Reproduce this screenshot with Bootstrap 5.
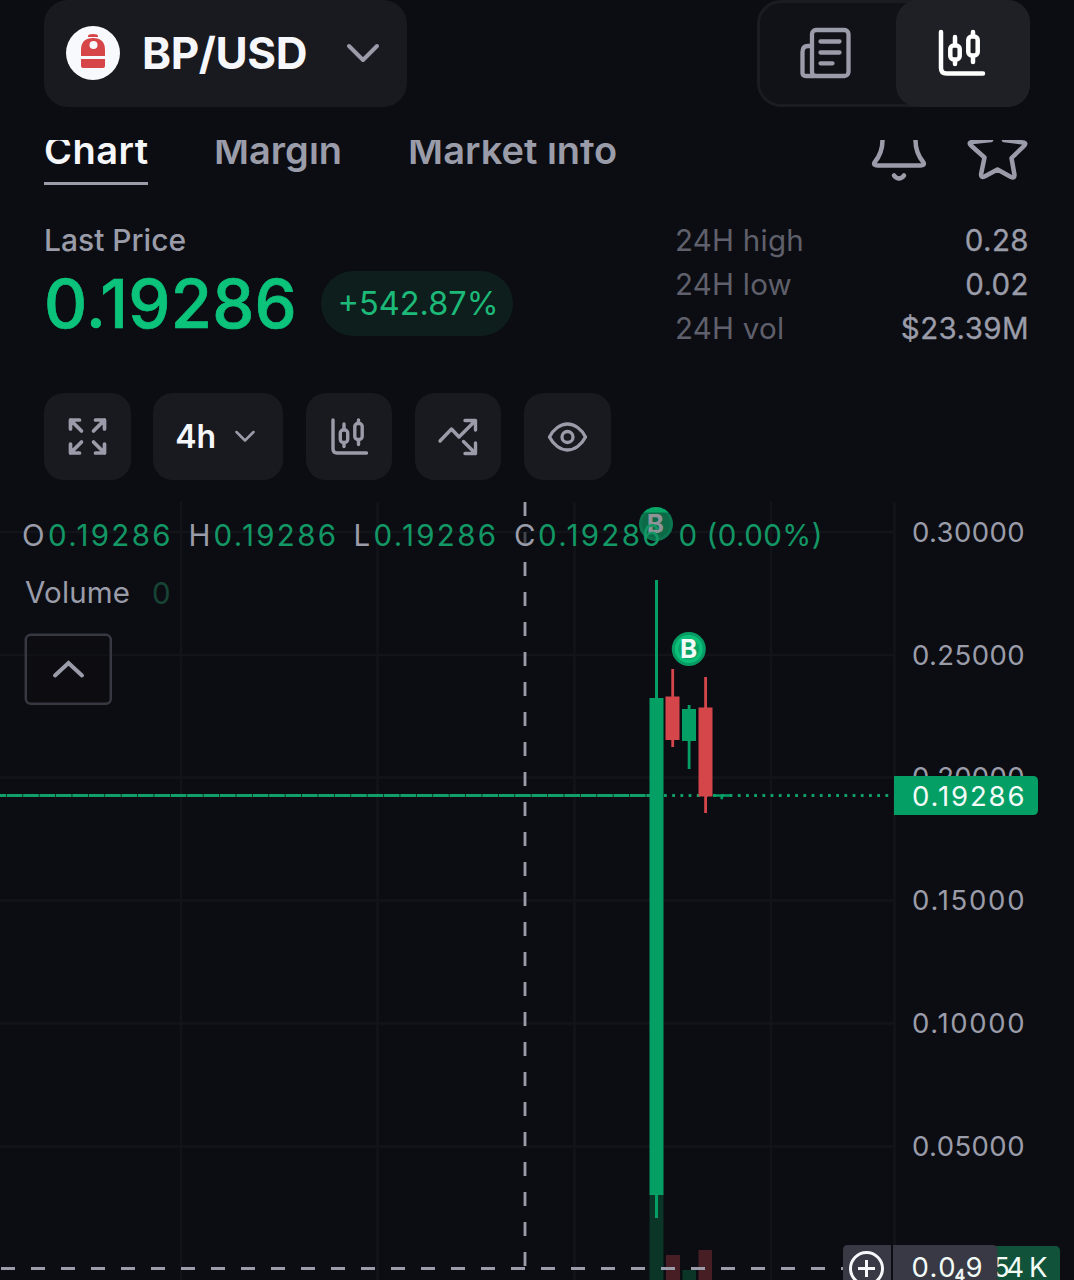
<!DOCTYPE html>
<html lang="en" data-bs-theme="dark">
<head>
<meta charset="utf-8">
<meta name="viewport" content="width=device-width, initial-scale=1">
<title>BP/USD</title>
<link href="https://cdn.jsdelivr.net/npm/bootstrap@5.3.0/dist/css/bootstrap.min.css" rel="stylesheet">
<style>
body{background:#0c0d12;color:#9a9ca9;font-family:Inter,"Liberation Sans",sans-serif;overflow:hidden}
.screen{width:1074px;height:1280px;overflow:hidden}
svg{display:block;flex:none}
.ico{fill:none;stroke:#9a9ca9;stroke-linecap:round;stroke-linejoin:round}
.topbar{height:107px;padding:0 44px}
.pair{width:363px;background:#191a1f;border-radius:24px;padding:0 27px 2px 22px;color:#f6f7fb}
.pair-name{font-size:44px;font-weight:700;line-height:1;margin-left:22px;letter-spacing:-.4px}
.switcher{width:273px;background:#111217;border:3px solid #1b1c21;border-radius:24px}
.switcher .on{width:134px;margin:-3px;background:#1f2025;border-radius:22px;padding-bottom:1px}
.switcher .off{padding:0 10px 1px 0}
.tabbar{height:53px;margin-top:33px;padding:0 44px;overflow:hidden}
.tabitem{font-size:38px;font-weight:600;line-height:45px;height:57px;margin-top:-12px;margin-right:66px;white-space:nowrap}
.tabitem.on{color:#f6f7fb;border-bottom:3px solid #9a9ca9;width:104px;letter-spacing:.5px}
.quote{margin-top:25px;padding:0 45px 0 44px;height:132px}
.cap-label{font-size:30px;font-weight:500;line-height:44px}
.last{font-size:67px;font-weight:500;line-height:66px;color:#0bc37b;width:277px;letter-spacing:.2px;padding-top:2px;-webkit-text-stroke:.7px #0bc37b}
.change{width:192px;height:65px;background:#0e1e1d;color:#1cb978;font-size:32.5px;padding:2px 0 0 2px}
.stats{width:354px;font-size:29.5px;line-height:44px;letter-spacing:.25px}
.stats dt{font-weight:400;color:#5f606b}
.stats dd{margin:0;font-weight:400;letter-spacing:.4px;-webkit-text-stroke:.3px #9a9ca9}
.tools{gap:22.8px;padding-left:44px;margin-top:43px;height:87px}
.tool{width:86.5px;height:87px;background:#191a1f;border-radius:20px;border:0;padding:0;overflow:hidden}
.tool.wide{width:129.5px;color:#f6f7fb;font-size:32px;font-weight:600}
.plot{margin-top:22px}
.plot text{font-family:Inter,"Liberation Sans",sans-serif;fill:#9a9ca9}
.plot .up{fill:#129765}
.plot .w{fill:#f3fbf8}
</style>
<script src="https://cdn.jsdelivr.net/npm/bootstrap@5.3.0/dist/js/bootstrap.bundle.min.js"></script>
</head>
<body>
<main class="screen d-flex flex-column">
<header class="topbar d-flex justify-content-between flex-shrink-0">
  <div class="pair d-flex align-items-center">
    <svg width="54" height="54" viewBox="0 0 54 54"><circle cx="27" cy="27" r="27" fill="#f8f9fc"/><path fill="#d64649" d="M22 10q0-2 5-2t5 2v1H22zM15 30v-6Q15 12 27 12t12 12v6zM15 33h24v7q0 2-2 2H17q-2 0-2-2z"/><circle cx="27.500" cy="19" r="4" fill="#f8f9fc"/></svg>
    <span class="pair-name">BP/USD</span>
    <svg class="ico ms-auto" width="34" height="22" viewBox="0 -1 34 22" stroke-width="4"><path d="M3 3l14 14L31 3"/></svg>
  </div>
  <div class="switcher d-flex">
    <div class="off flex-fill d-flex align-items-center justify-content-center"><svg class="ico" width="52" height="52" viewBox="799 27 52 52" stroke-width="4.300"><rect x="812" y="30" width="36.500" height="46" rx="4"/><path d="M812 46h-4q-5.500 0-5.500 6v21q0 3 3.500 3h9M820.500 41.500h19M820.500 52.500h19M820.500 63.300h12"/></svg></div>
    <div class="on d-flex align-items-center justify-content-center"><svg width="50" height="50" viewBox="938 28 50 50" fill="none" stroke="#fff" stroke-width="4.500" stroke-linecap="round" stroke-linejoin="round"><path d="M941 32v36q0 5.500 5.500 5.500H983M955 37v8M955 60v4M973 32v4M973 56v6"/><rect x="950.300" y="45.500" width="9.400" height="14" rx="3.500"/><rect x="968.300" y="36.500" width="9.400" height="19" rx="3.500"/></svg></div>
  </div>
</header>
<nav class="tabbar d-flex flex-shrink-0">
  <div class="tabitem on">Chart</div>
  <div class="tabitem">Margin</div>
  <div class="tabitem me-0">Market info</div>
  <svg class="ico ms-auto" width="160" height="53" viewBox="870 140 160 53" stroke-width="4.500"><path d="M874.500 162.500c5-6 8-12 8-22v-4q0-14 16.500-14t16.500 14v4c0 10 3 16 8 22q1.500 3-3 3h-43q-4.500 0-3-3z"/><path d="M894 175.500q5 6 10 0"/><path d="M997.500 126L991 140l-19 2q-4 .5-1 3.500l13.500 12-3.500 17q0 3.500 3.500 2L997.500 169.500l13.500 7.500q3.500 1.500 3.500-2L1011.500 158 1024 146q3-3-1-3.500L1004 140z"/></svg>
</nav>
<section class="quote d-flex justify-content-between flex-shrink-0">
  <div>
    <div class="cap-label">Last Price</div>
    <div class="d-flex align-items-center" style="margin-top:7px">
      <div class="last">0.19286</div>
      <div class="change rounded-pill d-flex align-items-center justify-content-center">+542.87%</div>
    </div>
  </div>
  <dl class="stats mb-0">
    <div class="d-flex justify-content-between"><dt>24H high</dt><dd>0.28</dd></div>
    <div class="d-flex justify-content-between"><dt>24H low</dt><dd>0.02</dd></div>
    <div class="d-flex justify-content-between"><dt>24H vol</dt><dd>$23.39M</dd></div>
  </dl>
</section>
<div class="tools d-flex flex-shrink-0">
  <button class="tool"><svg class="ico" width="87" height="87" viewBox="44.500 393 87 87" stroke-width="3.700"><path d="M71 429v-9h9M71 420l11 11M96 420h9v9M105 420l-11 11M71 444v9h9M71 453l11-11M105 444v9h-9M105 453l-11-11"/></svg></button>
  <button class="tool wide d-flex align-items-center justify-content-between" style="padding:0 28px 0 22px"><span>4h</span><svg class="ico" width="20" height="13" viewBox="0 0 20 13" stroke-width="2.500"><path d="M1.500 2l8.500 8.500L18.500 2"/></svg></button>
  <button class="tool"><svg class="ico" width="87" height="87" viewBox="305.500 393 87 87" stroke-width="3.400"><path d="M332.500 420v29q0 4 4 4H366M343.500 424v5M343.500 443v3.500M358 420v3M358 440v4.500"/><rect x="339.800" y="430" width="7.400" height="12.500" rx="3"/><rect x="354.300" y="423.500" width="7.400" height="16" rx="3"/></svg></button>
  <button class="tool"><svg class="ico" width="87" height="87" viewBox="415 393 87 87" stroke-width="3.400"><path d="M440 441l11.500-12 7.500 8 16-16M465 420.500h10.500V430M463.500 441.500l12 12M465 453.500h10.500V443"/></svg></button>
  <button class="tool"><svg class="ico" width="87" height="87" viewBox="524 393 87 87" stroke-width="3.300"><path d="M549.500 437c4-8 11-13 18-13s14 5 18 13c-4 8-11 13-18 13s-14-5-18-13z"/><circle cx="567.500" cy="437" r="5.500"/></svg></button>
</div>
<section class="plot flex-shrink-0">
<svg width="1074" height="778" viewBox="0 502 1074 778">
  <path stroke="#131419" stroke-width="2.500" d="M0 532H894M0 655H894M0 777.500H894M0 900.500H894M0 1023.500H894M0 1146.500H894M181 502V1280M377.500 502V1280M574.500 502V1280M771 502V1280M894.500 502V1280"/>
  <g fill="#0b3527"><path d="M649.500 1195h14v85h-14zM682.500 1270h13.500v10h-13.500z"/><path fill="#471e24" d="M666 1255h14v25h-14zM698.500 1250h13.500v30h-13.500z"/></g>
  <path stroke="#129e68" stroke-width="2.800" stroke-dasharray="15.700 .7" stroke-dashoffset="9.700" d="M0 795.500H650"/>
  <path stroke="#129e68" stroke-width="2.800" stroke-dasharray="2.800 5.400" d="M664 795.500H890"/>
  <g fill="#049f65"><path d="M649.500 698h14v497h-14zM655 580h3v638h-3zM682 709h14v32h-14zM687.700 705h2.800v64h-2.800zM713 794.200h17v2.600h-17zM720.500 794.200h2.600v5h-2.600z"/></g>
  <path fill="#d4464a" d="M665.500 696.500h14V740h-14zM671.300 669h2.800v78h-2.800zM698.500 707.500h14v89h-14zM704.200 677h2.800v136h-2.800z"/>
  <g stroke="#9a9ca9" stroke-width="2.800"><path stroke-dasharray="14 16" d="M525 502V1268.500"/><path stroke-dasharray="14 16" stroke-dashoffset="-1" d="M0 1268.500H843"/></g>
  <path fill="#0c0d12" fill-opacity=".6" d="M523 528h4v20h-4z"/>
  <circle cx="656" cy="524" r="15.500" fill="#0c6a47" stroke="#0b7550" stroke-width="3"/>
  <path fill="#07a765" d="M643.500 512.500Q649 507 656 507t12.500 5.500z"/>
  <text x="646.800" y="532.500" font-size="26" font-weight="700" style="fill:#8d9397">B</text>
  <circle cx="688.800" cy="649" r="15.500" fill="#0bbf79" stroke="#079b64" stroke-width="3"/><circle cx="688.800" cy="649" r="10.500" fill="#08a367"/>
  <text x="679.900" y="657.500" font-size="26" font-weight="700" class="w">B</text>
  <g font-size="29.500">
    <text x="22" y="546">O</text><text class="up" x="48" y="546" textLength="122.500">0.19286</text>
    <text x="188.500" y="546">H</text><text class="up" x="213.500" y="546" textLength="122.500">0.19286</text>
    <text x="353.500" y="546">L</text><text class="up" x="373.500" y="546" textLength="122.500">0.19286</text>
    <text x="514" y="546">C</text><text class="up" x="538" y="546" textLength="122.500">0.19286</text>
    <text class="up" x="678.500" y="546">0</text><text class="up" x="706.500" y="546" textLength="116">(0.00%)</text>
    <text x="25" y="603" textLength="105">Volume</text><text x="152" y="603.500" style="fill:#174435">0</text>
  </g>
  <rect x="25.800" y="634.800" width="85" height="69" rx="5" fill="#0c0d12" fill-opacity=".4" stroke="#373841" stroke-width="2.500"/>
  <path d="M55 675.500l13.500-12.500L82 675.500" fill="none" stroke="#9a9ca9" stroke-width="4" stroke-linecap="round"/>
  <g font-size="27.500">
    <text x="912" y="542" textLength="112.500">0.30000</text><text x="912" y="665" textLength="112.500">0.25000</text><text x="912" y="787" textLength="112.500">0.20000</text><text x="912" y="910" textLength="112.500">0.15000</text><text x="912" y="1033" textLength="112.500">0.10000</text><text x="912" y="1156" textLength="112.500">0.05000</text>
    <path fill="#049f65" d="M894 776h139q5 0 5 5v29q0 5-5 5H894z"/>
    <text class="w" x="912" y="806" textLength="112.500">0.19286</text>
    <path fill="#10533a" d="M990 1246h65q5 0 5 5v29h-70z"/>
    <text class="w" x="993" y="1277" textLength="31">54</text><text class="w" x="1029" y="1277">K</text>
    <path fill="#383944" d="M848 1245h43v35h-48v-30q0-5 5-5zM893 1245h99q5.500 0 5.500 5v30H893z"/>
    <path fill="none" stroke="#f6f7fb" stroke-width="3" d="M858 1268.500h17M866.500 1260v17"/><circle cx="866.500" cy="1268.500" r="16" fill="none" stroke="#f6f7fb" stroke-width="3"/>
    <text class="w" x="911.500" y="1277" textLength="44">0.0</text><text class="w" x="954.800" y="1280.500" font-size="16" stroke="#f3fbf8" stroke-width=".7">4</text><text class="w" x="965.500" y="1277">9</text>
  </g>
</svg>
</section>
</main>
</body>
</html>
